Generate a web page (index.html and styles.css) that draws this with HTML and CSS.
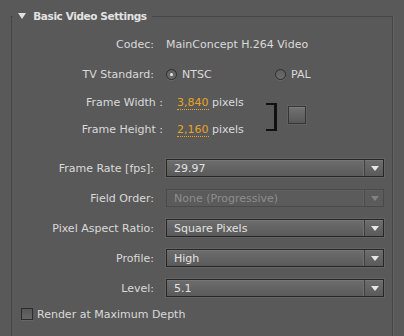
FILE: index.html
```html
<!DOCTYPE html>
<html lang="en">
<head>
    <meta charset="UTF-8">
    <meta name="viewport" content="width=device-width, initial-scale=1.0">
    <title>Basic Video Settings</title>
    <link rel="stylesheet" href="styles.css">
</head>
<body>
    <fieldset class="panel">
        <legend class="panel-title">
            <svg class="twisty" width="8" height="6" viewBox="0 0 8 6"><path d="M0 0H8L4 6Z" fill="#e0e0e0"/></svg>
            Basic Video Settings
        </legend>

        <div class="row">
            <span class="label">Codec:</span>
            <span class="value">MainConcept H.264 Video</span>
        </div>

        <div class="row">
            <span class="label">TV Standard:</span>
            <div class="radios">
                <label class="radio-item"><span class="radio checked"></span>NTSC</label>
                <label class="radio-item"><span class="radio"></span>PAL</label>
            </div>
        </div>

        <!-- Frame size -->
        <div class="frame-size">
            <div class="frame-rows">
                <div class="frame-row">
                    <span class="label">Frame Width :</span>
                    <span class="value"><span class="num">3,840</span> pixels</span>
                </div>
                <div class="frame-row">
                    <span class="label">Frame Height :</span>
                    <span class="value"><span class="num">2,160</span> pixels</span>
                </div>
            </div>
            <div class="bracket"></div>
            <div class="chain-button"></div>
        </div>

        <div class="row first-drop">
            <span class="label">Frame Rate [fps]:</span>
            <div class="dropdown"><span>29.97</span><span class="arrow"></span></div>
        </div>
        <div class="row">
            <span class="label">Field Order:</span>
            <div class="dropdown disabled"><span>None (Progressive)</span><span class="arrow"></span></div>
        </div>
        <div class="row">
            <span class="label">Pixel Aspect Ratio:</span>
            <div class="dropdown"><span>Square Pixels</span><span class="arrow"></span></div>
        </div>
        <div class="row">
            <span class="label">Profile:</span>
            <div class="dropdown"><span>High</span><span class="arrow"></span></div>
        </div>
        <div class="row">
            <span class="label">Level:</span>
            <div class="dropdown"><span>5.1</span><span class="arrow"></span></div>
        </div>

        <label class="check-row"><span class="checkbox"></span>Render at Maximum Depth</label>
    </fieldset>
</body>
</html>
```

FILE: styles.css
```css
body {
    margin: 0;
    background-color: #595959;
    font-family: "DejaVu Sans", sans-serif;
    font-size: 11px;
    color: #dadada;
    overflow: hidden;
    height: 336px;
}

.panel {
    margin: 9px 0 0 11px;
    padding: 0;
    width: 382px;
    min-height: 360px;
    border: 1px solid #464646;
    box-shadow: 1px 0 0 #626262;
    box-sizing: border-box;
}

.panel-title {
    margin-left: 1px;
    padding: 0 5px 0 5px;
    font-weight: bold;
    font-size: 10.5px;
    letter-spacing: -0.4px;
    color: #e2e2e2;
    line-height: 14px;
}

.twisty {
    margin-right: 4px;
    vertical-align: 1px;
}

.row {
    display: grid;
    grid-template-columns: 142px 218px;
    column-gap: 12px;
    align-items: center;
    height: 30px;
}

.row:first-of-type {
    margin-top: 6px;
}

.label {
    text-align: right;
    white-space: nowrap;
}

.value {
    white-space: nowrap;
}

.radios {
    display: flex;
}

.radio-item {
    display: flex;
    align-items: center;
    gap: 5px;
    width: 110px;
}

.radio {
    width: 9px;
    height: 9px;
    border: 1px solid #2e2e2e;
    border-radius: 50%;
    background: linear-gradient(#5f5f5f, #6c6c6c);
    box-shadow: 0 1px 0 #666;
    position: relative;
}

.radio.checked::after {
    content: "";
    position: absolute;
    left: 3px;
    top: 3px;
    width: 3px;
    height: 3px;
    border-radius: 50%;
    background-color: #e8e8e8;
}

/* Frame size block */
.frame-size {
    display: flex;
    align-items: center;
}

.frame-row {
    display: grid;
    grid-template-columns: 151px 89px;
    column-gap: 14px;
    align-items: center;
    height: 27px;
}

.num {
    color: #e8a422;
    border-bottom: 1px dotted #e8a422;
}

.bracket {
    width: 8px;
    height: 24px;
    border-top: 2px solid #111;
    border-bottom: 2px solid #111;
    border-right: 3px solid #111;
    margin-top: 1px;
}

.chain-button {
    width: 16px;
    height: 16px;
    margin-left: 11px;
    margin-top: -3px;
    border: 1px solid #353535;
    background: linear-gradient(#727272, #585858);
    box-shadow: inset 0 1px 0 #7c7c7c, 0 0 0 1px #616161;
}

.first-drop {
    margin-top: 10px;
}

.dropdown {
    display: flex;
    align-items: center;
    height: 16px;
    padding-left: 7px;
    border: 1px solid #262626;
    background: linear-gradient(#6d6d6d, #5a5a5a);
    box-shadow: inset 0 1px 0 #777, 0 0 0 1px #646464;
    color: #e2e2e2;
    position: relative;
}

.dropdown span:first-child {
    flex: 1;
}

.arrow {
    width: 18px;
    height: 16px;
    border-left: 1px solid #3e3e3e;
    box-shadow: -1px 0 0 #727272;
    position: relative;
}

.arrow::after {
    content: "";
    position: absolute;
    left: 6px;
    top: 6px;
    border-left: 4px solid transparent;
    border-right: 4px solid transparent;
    border-top: 5px solid #e6e6e6;
}

.dropdown.disabled {
    border-color: #4a4a4a;
    background: #5b5b5b;
    box-shadow: inset 0 1px 0 #606060;
    color: #8d8d8d;
}

.dropdown.disabled .arrow {
    border-left-color: #4c4c4c;
    box-shadow: -1px 0 0 #626262;
}

.dropdown.disabled .arrow::after {
    border-top-color: #828282;
}

.check-row {
    display: flex;
    align-items: center;
    gap: 4px;
    margin: 4px 0 0 9px;
    height: 14px;
}

.checkbox {
    width: 10px;
    height: 10px;
    border: 1px solid #2b2b2b;
    background: linear-gradient(#575757, #666);
    box-shadow: 0 1px 0 #666;
}
```
